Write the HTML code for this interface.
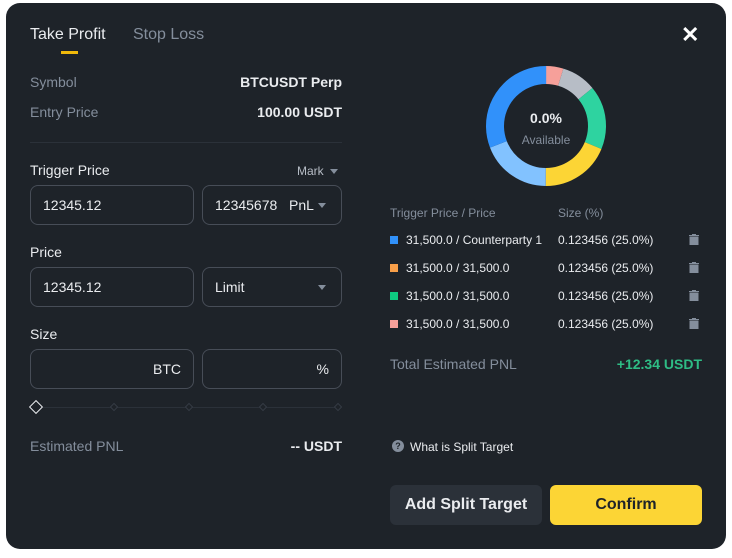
<!DOCTYPE html>
<html><head><meta charset="utf-8"><style>
*{margin:0;padding:0;box-sizing:border-box}
body{width:732px;height:558px;background:#fff;font-family:"Liberation Sans",sans-serif;position:relative;overflow:hidden}
.p{position:absolute;left:6px;top:3px;width:720px;height:546px;background:#1e2329;border-radius:14px}
.a{position:absolute;white-space:nowrap}
.g{color:#848e9c;font-size:14px}
.w{color:#eaecef;font-size:14px}
.b{font-weight:bold}
.in{position:absolute;border:1px solid #474d57;border-radius:8px;height:40px;color:#eaecef;font-size:14px;line-height:38px;padding:0 12px;white-space:nowrap}
.tri{display:inline-block;width:0;height:0;border-left:4px solid transparent;border-right:4px solid transparent;border-top:5px solid #848e9c;vertical-align:middle}
.sq{position:absolute;width:8px;height:8px}
.tr{position:absolute;left:689px;width:10px;height:11px}
.s{font-size:12px;color:#eaecef}
</style></head><body>
<div class="p"></div>
<div class="a w" style="left:30px;top:26px;font-size:16px">Take Profit</div>
<div class="a" style="left:61px;top:51px;width:17px;height:3px;background:#f0b90b"></div>
<div class="a g" style="left:133px;top:26px;font-size:16px">Stop Loss</div>
<div class="a" style="left:681px;top:26px;color:#fff;font-size:22px;font-weight:bold;line-height:18px">✕</div>
<div class="a g" style="left:30px;top:74px">Symbol</div>
<div class="a w b" style="right:390px;top:74px">BTCUSDT Perp</div>
<div class="a g" style="left:30px;top:104px">Entry Price</div>
<div class="a w b" style="right:390px;top:104px">100.00 USDT</div>
<div class="a" style="left:30px;top:142px;width:312px;height:1px;background:#2b3139"></div>
<div class="a w" style="left:30px;top:162px">Trigger Price</div>
<div class="a g" style="left:297px;top:164px;font-size:12px;color:#b7bdc6">Mark <span class="tri" style="margin-left:3px"></span></div>
<div class="in" style="left:30px;top:185px;width:164px">12345.12</div>
<div class="in" style="left:202px;top:185px;width:140px">12345678<span style="position:absolute;left:86px">PnL</span><span class="tri" style="position:absolute;right:15px;top:17px"></span></div>
<div class="a w" style="left:30px;top:244px">Price</div>
<div class="in" style="left:30px;top:267px;width:164px">12345.12</div>
<div class="in" style="left:202px;top:267px;width:140px">Limit<span class="tri" style="position:absolute;right:15px;top:17px"></span></div>
<div class="a w" style="left:30px;top:326px">Size</div>
<div class="in" style="left:30px;top:349px;width:164px;text-align:right">BTC</div>
<div class="in" style="left:202px;top:349px;width:140px;text-align:right">%</div>
<div class="a" style="left:36px;top:407px;width:304px;height:1px;background:#2b3139"></div>
<div class="a" style="left:31px;top:402px;width:10px;height:10px;border:1.5px solid #eaecef;transform:rotate(45deg);background:#1e2329"></div>
<div class="a" style="left:111px;top:404px;width:6px;height:6px;border:1px solid #363c45;transform:rotate(45deg);background:#1e2329"></div>
<div class="a" style="left:186px;top:404px;width:6px;height:6px;border:1px solid #363c45;transform:rotate(45deg);background:#1e2329"></div>
<div class="a" style="left:260px;top:404px;width:6px;height:6px;border:1px solid #363c45;transform:rotate(45deg);background:#1e2329"></div>
<div class="a" style="left:335px;top:404px;width:6px;height:6px;border:1px solid #363c45;transform:rotate(45deg);background:#1e2329"></div>
<div class="a g" style="left:30px;top:438px">Estimated PNL</div>
<div class="a w b" style="right:390px;top:438px">-- USDT</div>
<svg class="a" style="left:486px;top:66px" width="120" height="120" viewBox="0 0 120 120">
<g transform="rotate(-90 60 60)" fill="none" stroke-width="18">
<circle cx="60" cy="60" r="51" stroke="#f6a09a" stroke-dasharray="15 306" stroke-dashoffset="0"/>
<circle cx="60" cy="60" r="51" stroke="#b7bdc6" stroke-dasharray="30 291" stroke-dashoffset="-15"/>
<circle cx="60" cy="60" r="51" stroke="#2ed3a0" stroke-dasharray="55 266" stroke-dashoffset="-45"/>
<circle cx="60" cy="60" r="51" stroke="#fcd535" stroke-dasharray="60.2 261" stroke-dashoffset="-100"/>
<circle cx="60" cy="60" r="51" stroke="#82c2ff" stroke-dasharray="61 260" stroke-dashoffset="-160.2"/>
<circle cx="60" cy="60" r="51" stroke="#3191fa" stroke-dasharray="99.3 221" stroke-dashoffset="-221.2"/>
</g></svg>
<div class="a w b" style="left:546px;top:110px;transform:translateX(-50%);font-size:14px">0.0%</div>
<div class="a g" style="left:546px;top:133px;transform:translateX(-50%);font-size:12px">Available</div>
<div class="a g" style="left:390px;top:206px;font-size:12px">Trigger Price / Price</div>
<div class="a g" style="left:558px;top:206px;font-size:12px">Size (%)</div>
<div class="sq" style="left:390px;top:236px;background:#3191fa"></div>
<div class="a s" style="left:406px;top:233px">31,500.0 / Counterparty 1</div>
<div class="a s" style="left:558px;top:233px">0.123456 (25.0%)</div>
<div class="sq" style="left:390px;top:264px;background:#f89f49"></div>
<div class="a s" style="left:406px;top:261px">31,500.0 / 31,500.0</div>
<div class="a s" style="left:558px;top:261px">0.123456 (25.0%)</div>
<div class="sq" style="left:390px;top:292px;background:#0ecb81"></div>
<div class="a s" style="left:406px;top:289px">31,500.0 / 31,500.0</div>
<div class="a s" style="left:558px;top:289px">0.123456 (25.0%)</div>
<div class="sq" style="left:390px;top:320px;background:#f6a09a"></div>
<div class="a s" style="left:406px;top:317px">31,500.0 / 31,500.0</div>
<div class="a s" style="left:558px;top:317px">0.123456 (25.0%)</div>
<svg class="tr" style="top:234px" viewBox="0 0 10 11"><path d="M0 1.5h10M3.5 1.5V0h3v1.5M1 3h8v8H1z" fill="#848e9c" stroke="#848e9c" stroke-width="1"/></svg>
<svg class="tr" style="top:262px" viewBox="0 0 10 11"><path d="M0 1.5h10M3.5 1.5V0h3v1.5M1 3h8v8H1z" fill="#848e9c" stroke="#848e9c" stroke-width="1"/></svg>
<svg class="tr" style="top:290px" viewBox="0 0 10 11"><path d="M0 1.5h10M3.5 1.5V0h3v1.5M1 3h8v8H1z" fill="#848e9c" stroke="#848e9c" stroke-width="1"/></svg>
<svg class="tr" style="top:318px" viewBox="0 0 10 11"><path d="M0 1.5h10M3.5 1.5V0h3v1.5M1 3h8v8H1z" fill="#848e9c" stroke="#848e9c" stroke-width="1"/></svg>
<div class="a g" style="left:390px;top:356px">Total Estimated PNL</div>
<div class="a b" style="right:30px;top:356px;color:#2ebd85;font-size:14px">+12.34 USDT</div>
<div class="a" style="left:392px;top:440px;width:12px;height:12px;border-radius:50%;background:#848e9c;color:#1e2329;font-size:9px;font-weight:bold;text-align:center;line-height:12px">?</div>
<div class="a s" style="left:410px;top:440px">What is Split Target</div>
<div class="a" style="left:390px;top:485px;width:152px;height:40px;border-radius:6px;background:#2b3139;color:#eaecef;font-size:16px;font-weight:bold;text-align:center;line-height:40px">Add Split Target</div>
<div class="a" style="left:550px;top:485px;width:152px;height:40px;border-radius:6px;background:#fcd535;color:#1e2329;font-size:16px;font-weight:bold;text-align:center;line-height:40px">Confirm</div>
</body></html>
